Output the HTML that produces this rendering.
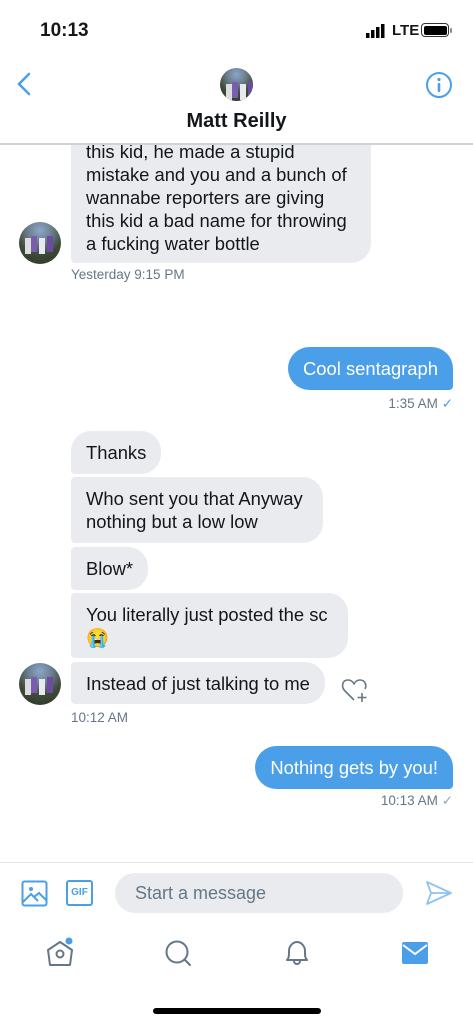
<!DOCTYPE html>
<html><head><meta charset="utf-8"><style>
*{margin:0;padding:0;box-sizing:border-box}
body{width:473px;height:1024px;overflow:hidden;background:#fff;font-family:"Liberation Sans",sans-serif;color:#14171a;position:relative}
.a{position:absolute}
.g{position:absolute;left:71px;background:#e9ebee;border-radius:20px 20px 20px 20px;border-top-left-radius:4px;border-bottom-left-radius:4px;font-size:18.4px;line-height:23px;padding:10px 15px 10px 15px;white-space:nowrap}
.b{position:absolute;background:#4a9fe8;color:#fff;border-radius:22px 22px 4px 22px;font-size:18.4px;line-height:23px;padding:10px 15px;white-space:nowrap}
.t{position:absolute;font-size:13.5px;color:#657786}
.av{position:absolute;width:42px;height:42px;border-radius:50%;background:radial-gradient(circle at 50% 20%,#8aa6c9 0,#6d7f8e 30%,#3f4b3a 60%,#2c3424 100%);overflow:hidden}
.av:after{content:"";position:absolute;left:12px;top:14px;width:6px;height:16px;background:#7a5cb0;box-shadow:8px 2px 0 #e8e8f0,16px 0 0 #6a4ca0,-6px 2px 0 #ddd}
</style></head><body>
<div class="a" style="left:40px;top:20px;font-size:19px;font-weight:bold">10:13</div>
<div class="a" style="left:366px;top:24px">
<svg width="24" height="14"><rect x="0" y="9" width="3.5" height="5" fill="#000"/><rect x="5" y="6" width="3.5" height="8" fill="#000"/><rect x="10" y="3" width="3.5" height="11" fill="#000"/><rect x="15" y="0" width="3.5" height="14" fill="#000"/></svg></div>
<div class="a" style="left:392px;top:22px;font-size:15px;font-weight:bold">LTE</div>
<div class="a" style="left:421px;top:23px;width:28px;height:14px;border:1.5px solid #333;border-radius:4px;padding:1.5px"><div style="width:100%;height:100%;background:#000;border-radius:2px"></div></div>
<div class="a" style="left:450px;top:28px;width:2px;height:5px;background:#888;border-radius:1px"></div>
<svg class="a" style="left:14px;top:71px" width="20" height="26"><path d="M15 3 L5 13 L15 23" fill="none" stroke="#4a9fe8" stroke-width="2.5" stroke-linecap="round"/></svg>
<div class="av" style="left:220px;top:68px;width:33px;height:33px"></div>
<div class="a" style="left:0;width:473px;top:110px;text-align:center;font-size:20px;font-weight:bold">Matt Reilly</div>
<svg class="a" style="left:425px;top:71px" width="28" height="28"><circle cx="14" cy="14" r="12" fill="none" stroke="#4a9fe8" stroke-width="2"/><circle cx="14" cy="8.5" r="1.6" fill="#4a9fe8"/><rect x="12.7" y="12" width="2.6" height="9" rx="1" fill="#4a9fe8"/></svg>

<div class="a" style="left:0;top:144px;width:473px;height:880px;overflow:hidden">
<div class="g" style="top:-37px;height:156px;border-top-left-radius:20px;padding-right:24px">xxx<br>this kid, he made a stupid<br>mistake and you and a bunch of<br>wannabe reporters are giving<br>this kid a bad name for throwing<br>a fucking water bottle</div>
</div>
<div class="a" style="left:0;top:143px;width:473px;height:1.5px;background:#ccd3da"></div>
<div class="av" style="left:19px;top:222px"></div>
<div class="t" style="left:71px;top:267px">Yesterday 9:15 PM</div>

<div class="b" style="right:20px;top:347px;height:43px">Cool sentagraph</div>
<div class="t" style="right:20px;top:396px">1:35 AM <span style="color:#4a9fe8">✓</span></div>

<div class="g" style="top:431px;height:43px;border-top-left-radius:20px">Thanks</div>
<div class="g" style="top:477px;height:66px;padding-right:20px">Who sent you that Anyway<br>nothing but a low low</div>
<div class="g" style="top:547px;height:43px">Blow*</div>
<div class="g" style="top:593px;height:65px;padding-right:20px">You literally just posted the sc<br>😭</div>
<div class="g" style="top:662px;height:42px">Instead of just talking to me</div>
<div class="av" style="left:19px;top:663px"></div>
<svg class="a" style="left:340px;top:676px" width="30" height="28"><path d="M14 24 L5 15 C1 11 2 4 8 4 C11 4 13 6 14 8 C15 6 17 4 20 4 C25 4 27 9 25 13" fill="none" stroke="#657786" stroke-width="1.6" stroke-linejoin="round"/><path d="M22 17 V26 M17.5 21.5 H26.5" stroke="#657786" stroke-width="1.6"/></svg>
<div class="t" style="left:71px;top:710px">10:12 AM</div>

<div class="b" style="right:20px;top:746px;height:43px">Nothing gets by you!</div>
<div class="t" style="right:20px;top:793px">10:13 AM <span style="color:#9aa5ae">✓</span></div>

<div class="a" style="left:0;top:862px;width:473px;height:1px;background:#e1e8ed"></div>
<svg class="a" style="left:21px;top:880px" width="27" height="27"><rect x="1.5" y="1.5" width="24" height="24" rx="2" fill="none" stroke="#4a9fe8" stroke-width="2"/><circle cx="10" cy="9" r="2" fill="#4a9fe8"/><path d="M2 22 L10 14 L17 21 M13 17 L18 13 L25 20" fill="none" stroke="#4a9fe8" stroke-width="2"/></svg>
<div class="a" style="left:66px;top:880px;width:27px;height:26px;border:2px solid #4a9fe8;border-radius:3px;color:#4a9fe8;font-size:10px;font-weight:bold;text-align:center;line-height:22px">GIF</div>
<div class="a" style="left:115px;top:873px;width:288px;height:40px;background:#e9ebee;border-radius:20px;font-size:18px;color:#657786;line-height:40px;padding-left:20px">Start a message</div>
<svg class="a" style="left:425px;top:880px" width="28" height="26"><path d="M2 2 L26 13 L2 24 L6 13 Z M6 13 H26" fill="none" stroke="#8ec3f0" stroke-width="1.8" stroke-linejoin="round"/></svg>

<svg class="a" style="left:45px;top:936px" width="30" height="32"><path d="M3 14 L15 6 L27 14 L25 29 H5 Z" fill="none" stroke="#657786" stroke-width="2" stroke-linejoin="round"/><circle cx="15" cy="18" r="3.5" fill="none" stroke="#657786" stroke-width="2"/><circle cx="24" cy="5" r="3.5" fill="#4a9fe8"/></svg>
<svg class="a" style="left:164px;top:939px" width="30" height="30"><circle cx="13" cy="13" r="10.5" fill="none" stroke="#657786" stroke-width="2"/><path d="M20.5 20.5 L26 26" stroke="#657786" stroke-width="2" stroke-linecap="round"/></svg>
<svg class="a" style="left:283px;top:939px" width="28" height="30"><path d="M4 21 C6 19 6 17 6 12 C6 7 10 3 14 3 C18 3 22 7 22 12 C22 17 22 19 24 21 Z" fill="none" stroke="#657786" stroke-width="2" stroke-linejoin="round"/><path d="M11 22 A3 3 0 0 0 17 22" fill="none" stroke="#657786" stroke-width="2"/></svg>
<svg class="a" style="left:402px;top:942px" width="26" height="24"><rect x="0" y="0" width="26" height="22" rx="2" fill="#4a9fe8"/><path d="M1 3 L13 12 L25 3" fill="none" stroke="#fff" stroke-width="2"/></svg>
<div class="a" style="left:153px;top:1008px;width:168px;height:6px;background:#000;border-radius:3px"></div>
</body></html>
